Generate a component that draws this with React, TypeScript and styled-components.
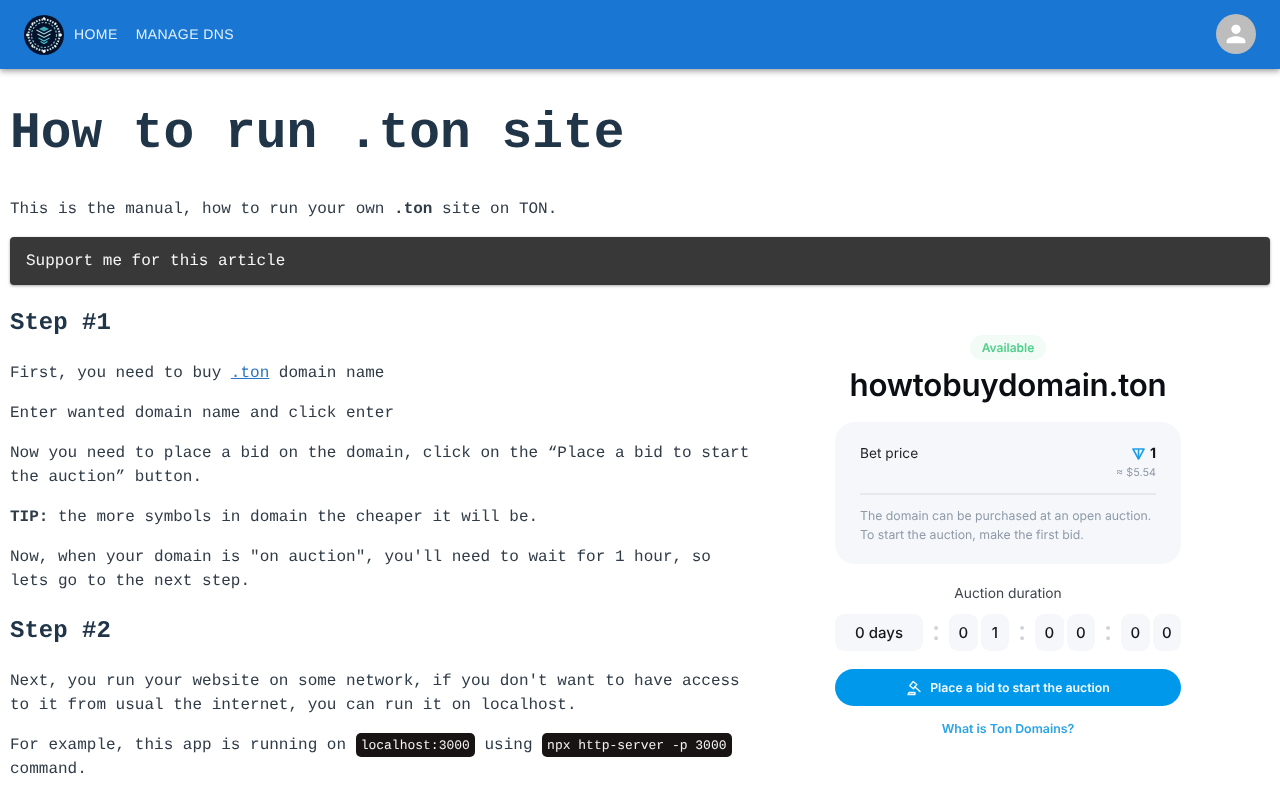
import React from "react";
import styled, { createGlobalStyle } from "styled-components";

const Global = createGlobalStyle`
  html, body { margin: 0; padding: 0; background: #fff; height: 100%; overflow: hidden; }
  body { font-family: "Liberation Mono", monospace; color: #1e3040; text-rendering: geometricPrecision; }
`;

const Page = styled.div`
  will-change: transform;
`;
const Bar = styled.header`
  position: relative;
  height: 69px;
  box-sizing: border-box;
  padding: 0 24px;
  display: flex;
  align-items: center;
  justify-content: space-between;
  background: #1976d2;
  box-shadow: 0 2px 4px -1px rgba(0,0,0,.2), 0 4px 5px 0 rgba(0,0,0,.14), 0 1px 10px 0 rgba(0,0,0,.12);
`;
const NavLeft = styled.nav`
  display: flex;
  align-items: center;
`;
const NavLink = styled.a<{ $first?: boolean }>`
  font: 14px/20px "Liberation Sans", Arial, sans-serif;
  letter-spacing: 0.42px;
  color: #e3f2fd;
  margin-left: ${(p) => (p.$first ? "10px" : "18px")};
  margin-top: -2px;
`;
const Avatar = styled.div`
  width: 40px;
  height: 40px;
  border-radius: 50%;
  background: #bdbdbd;
  display: flex;
  align-items: center;
  justify-content: center;
  margin-top: -1px;
`;
const Main = styled.main`
  padding: 0 10px;
`;
const Title = styled.h1`
  font: bold 51.2px/58px "Liberation Mono", monospace;
  color: #213548;
  margin: 0;
  padding-top: 36px;
`;
const Text = styled.p`
  font: 16px/24px "Liberation Mono", monospace;
  color: #2f3b47;
  margin: 16px 0;
`;
const Intro = styled(Text)`
  margin: 34px 0 16px;
`;
const Support = styled.div`
  height: 48px;
  box-sizing: border-box;
  padding: 12px 16px;
  font: 16px/24px "Liberation Mono", monospace;
  color: #f5f5f5;
  background: #383838;
  border-radius: 4px;
  box-shadow: 0 1px 3px rgba(0,0,0,.35);
`;
const Columns = styled.div`
  display: grid;
  grid-template-columns: 745px 346px;
  column-gap: 80px;
`;
const Heading = styled.h2`
  font: bold 24px/28px "Liberation Mono", monospace;
  color: #213548;
  margin: 25px 0 23px;
`;
const Strong = styled.b`
  font-weight: bold;
`;
const Anchor = styled.a`
  color: #2a76c0;
  text-decoration: underline;
`;
const Code = styled.code`
  font: 13px/17px "Liberation Mono", monospace;
  color: #f3f3f3;
  background: #181414;
  border-radius: 5px;
  padding: 5px 5px 4px;
`;

const Panel = styled.aside`
  font-family: Inter, sans-serif;
  display: flex;
  flex-direction: column;
  align-items: stretch;
  padding-top: 50px;
  filter: blur(0.3px);
`;
const BadgeRow = styled.div`
  display: flex;
  justify-content: center;
`;
const Badge = styled.span`
  height: 25px;
  width: 76px;
  border-radius: 13px;
  background: #f2fbf6;
  color: #50d08c;
  font: 600 12px/25px Inter, sans-serif;
  text-align: center;
`;
const Domain = styled.div`
  font: 600 31.3px/36px Inter, sans-serif;
  letter-spacing: -0.25px;
  color: #0b0f14;
  text-align: center;
  white-space: nowrap;
  margin-top: 7px;
`;
const Card = styled.div`
  margin-top: 19px;
  height: 142px;
  box-sizing: border-box;
  padding: 22px 25px 0;
  background: #f5f7fb;
  border-radius: 20px;
`;
const PriceRow = styled.div`
  display: flex;
  justify-content: space-between;
  height: 49px;
  border-bottom: 2px solid #e6eaef;
`;
const PriceLabel = styled.div`
  font: 400 13.7px/19px Inter, sans-serif;
  color: #1a2026;
  margin-top: 1px;
`;
const PriceCol = styled.div`
  display: flex;
  flex-direction: column;
  align-items: flex-end;
`;
const PriceValue = styled.div`
  display: flex;
  align-items: center;
  gap: 5px;
  font: 700 14px/19px Inter, sans-serif;
  color: #12171c;
`;
const PriceFiat = styled.div`
  font: 400 10.8px/19px Inter, sans-serif;
  color: #8f9ba8;
`;
const CardNote = styled.div`
  margin-top: 12px;
  font: 400 12.3px/18.5px Inter, sans-serif;
  color: #8f9ba8;
  white-space: nowrap;
`;
const DurationLabel = styled.div`
  margin-top: 21px;
  font: 400 13.8px/18px Inter, sans-serif;
  color: #3d454d;
  text-align: center;
`;
const Timer = styled.div`
  margin-top: 11px;
  display: flex;
  align-items: center;
`;
const TimeCell = styled.div<{ $wide?: boolean }>`
  width: ${(p) => (p.$wide ? "88px" : "28.5px")};
  height: 37px;
  margin-left: ${(p) => (p.$wide ? "0" : "3px")};
  background: #f5f7fb;
  border-radius: 9px;
  font: 500 15px/37px Inter, sans-serif;
  color: #14191e;
  text-align: center;
`;
const Colon = styled.div`
  width: 26px;
  height: 37px;
  margin-right: -3px;
  font: 500 27px/33px Inter, sans-serif;
  color: #cfd4d9;
  text-align: center;
`;
const BidButton = styled.div`
  margin-top: 18px;
  height: 37px;
  border-radius: 19px;
  background: #0098ea;
  color: #f2f9fe;
  font: 600 12.3px/37px Inter, sans-serif;
  display: flex;
  align-items: center;
  justify-content: center;
  gap: 8px;
`;
const WhatLink = styled.div`
  margin-top: 14px;
  font: 600 12.4px/18px Inter, sans-serif;
  color: #2aa4e6;
  text-align: center;
`;

const Logo = () => (
  <svg width="40" height="40" viewBox="0 0 40 40">
    <circle cx="20" cy="20" r="20" fill="#06122b" />
    <circle cx="20" cy="20" r="15.5" fill="none" stroke="#c7dfe3" strokeWidth="2" strokeDasharray="1.6 1.2" />
    <circle cx="20" cy="20" r="12.5" fill="none" stroke="#7fb3bd" strokeWidth="1.2" strokeDasharray="2 1.5" />
    <path d="M12.5 15l7.5 4 7.5-4M13.5 19l6.5 3.5 6.5-3.5" fill="none" stroke="#a9dfe3" strokeWidth="1.1" />
    <path d="M14.5 23l5.5 3 5.5-3M16.5 26.5l3.5 2 3.5-2" fill="none" stroke="#45c3cf" strokeWidth="1.2" />
    <path d="M15 14l5-2.5 5 2.5-5 2.5z" fill="#3fa9b8" />
    <g fill="#fff">
      <circle cx="20" cy="3.5" r="1.2" />
      <circle cx="20" cy="36.5" r="1.4" />
      <circle cx="3.5" cy="20" r="1.4" />
      <circle cx="36.5" cy="20" r="1.4" />
      <circle cx="8.5" cy="8.5" r="1" />
      <circle cx="31.5" cy="8.5" r="1" />
      <circle cx="8.5" cy="31.5" r="1" />
      <circle cx="31.5" cy="31.5" r="1" />
    </g>
  </svg>
);

const PersonIcon = () => (
  <svg width="28" height="28" viewBox="0 0 24 24" fill="#fff">
    <path d="M12 12c2.21 0 4-1.79 4-4s-1.79-4-4-4-4 1.79-4 4 1.79 4 4 4zm0 2c-2.67 0-8 1.34-8 4v2h16v-2c0-2.67-5.33-4-8-4z" />
  </svg>
);

const TonIcon = () => (
  <svg width="13" height="13" viewBox="0 0 13 13" fill="none" stroke="#1f9fe8" strokeWidth="1.6" strokeLinejoin="round">
    <path d="M1 2h11L6.5 12z" />
    <path d="M6.5 2v10" />
  </svg>
);

const GavelIcon = () => (
  <svg width="16" height="16" viewBox="0 0 16 16" fill="none" stroke="#f2f9fe" strokeWidth="1.4" strokeLinejoin="round" strokeLinecap="round">
    <path d="M7.2 1.5l3.6 3-3.4 4.2-3.7-3z" />
    <path d="M9 7l5 4.6" />
    <path d="M2 14.5h7v-2H3z" />
  </svg>
);

export default function App() {
  return (
    <Page>
      <Global />
      <Bar>
        <NavLeft>
          <Logo />
          <NavLink $first>HOME</NavLink>
          <NavLink>MANAGE DNS</NavLink>
        </NavLeft>
        <Avatar>
          <PersonIcon />
        </Avatar>
      </Bar>
      <Main>
        <Title>How to run .ton site</Title>
        <Intro>
          This is the manual, how to run your own <Strong>.ton</Strong> site on TON.
        </Intro>
        <Support>Support me for this article</Support>
        <Columns>
          <section>
            <Heading>Step #1</Heading>
            <Text>
              First, you need to buy <Anchor>.ton</Anchor> domain name
            </Text>
            <Text>Enter wanted domain name and click enter</Text>
            <Text>
              Now you need to place a bid on the domain, click on the “Place a bid to start the auction” button.
            </Text>
            <Text>
              <Strong>TIP:</Strong> the more symbols in domain the cheaper it will be.
            </Text>
            <Text>
              Now, when your domain is "on auction", you'll need to wait for 1 hour, so lets go to the next step.
            </Text>
            <Heading>Step #2</Heading>
            <Text>
              Next, you run your website on some network, if you don't want to have access to it from usual the internet, you can run it on localhost.
            </Text>
            <Text>
              For example, this app is running on <Code>localhost:3000</Code> using <Code>npx http-server -p 3000</Code> command.
            </Text>
          </section>
          <Panel>
            <BadgeRow>
              <Badge>Available</Badge>
            </BadgeRow>
            <Domain>howtobuydomain.ton</Domain>
            <Card>
              <PriceRow>
                <PriceLabel>Bet price</PriceLabel>
                <PriceCol>
                  <PriceValue>
                    <TonIcon />1
                  </PriceValue>
                  <PriceFiat>≈ $5.54</PriceFiat>
                </PriceCol>
              </PriceRow>
              <CardNote>
                The domain can be purchased at an open auction.
                <br />
                To start the auction, make the first bid.
              </CardNote>
            </Card>
            <DurationLabel>Auction duration</DurationLabel>
            <Timer>
              <TimeCell $wide>0 days</TimeCell>
              <Colon>:</Colon>
              <TimeCell>0</TimeCell>
              <TimeCell>1</TimeCell>
              <Colon>:</Colon>
              <TimeCell>0</TimeCell>
              <TimeCell>0</TimeCell>
              <Colon>:</Colon>
              <TimeCell>0</TimeCell>
              <TimeCell>0</TimeCell>
            </Timer>
            <BidButton>
              <GavelIcon />
              Place a bid to start the auction
            </BidButton>
            <WhatLink>What is Ton Domains?</WhatLink>
          </Panel>
        </Columns>
      </Main>
    </Page>
  );
}
